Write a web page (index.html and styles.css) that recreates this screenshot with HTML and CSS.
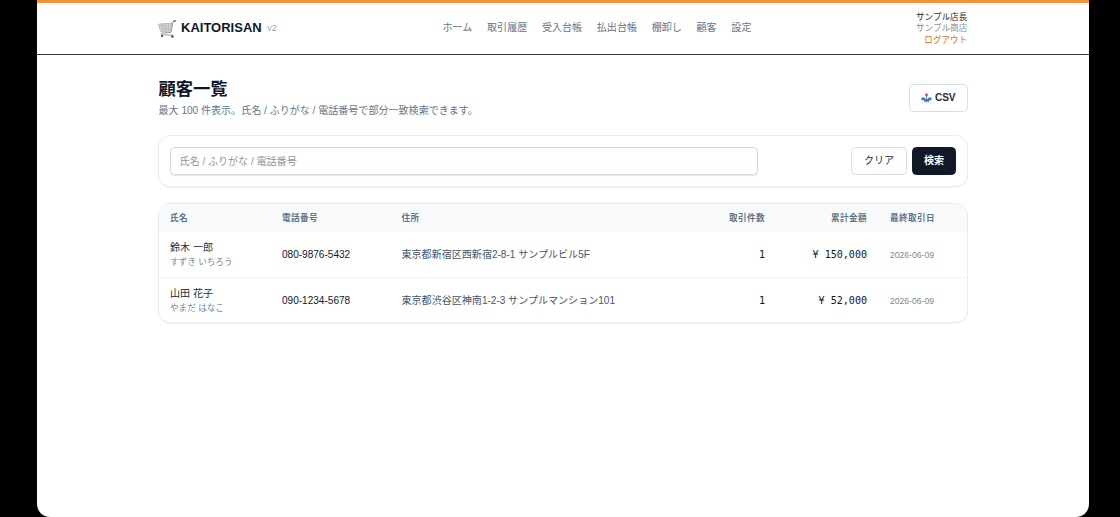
FILE: index.html
```html
<!DOCTYPE html>
<html lang="ja">
<head>
<meta charset="utf-8">
<title>顧客一覧 | KAITORISAN</title>
<link rel="stylesheet" href="styles.css">
</head>
<body>
<div class="window">
  <header class="header">
    <div class="container header-inner">
      <div class="brand">
        <svg class="cart" viewBox="0 0 18 18" fill="none" stroke-linecap="round" stroke-linejoin="round">
          <path d="M.8 4.2 13.9 3 12.8 11 3 11.4Z" fill="#dedede" stroke="#a6a6a6" stroke-width=".7"/>
          <path d="M3.2 4.1 4.9 11M5.6 3.9 7 11M8 3.7 8.8 11M10.4 3.5 10.8 11M1.4 6.3 13.5 5.4M2 8.7 13.1 8.2" stroke="#aaa" stroke-width=".6"/>
          <path d="M17.2.9 14.9 1.5 13 12.4 3.8 13.1 3.4 14.8 14.7 15.2" stroke="#8c8c8c" stroke-width=".9"/>
          <path d="M16 1.1 17.4.8" stroke="#555" stroke-width="1.2"/>
          <circle cx="4" cy="16.1" r="1.15" fill="#444"/><circle cx="14.4" cy="16.4" r="1.25" fill="#444"/>
          <circle cx="4" cy="16.1" r=".4" fill="#ccc"/><circle cx="14.4" cy="16.4" r=".4" fill="#ccc"/>
        </svg>
        <span class="brand-name">KAITORISAN</span>
        <span class="version">v2</span>
      </div>
      <nav class="nav"><a>ホーム</a><a>取引履歴</a><a>受入台帳</a><a>払出台帳</a><a>棚卸し</a><a>顧客</a><a>設定</a></nav>
      <div class="account">
        <div class="user">サンプル店長</div>
        <div class="shop">サンプル商店</div>
        <div class="logout">ログアウト</div>
      </div>
    </div>
  </header>
  <main class="container">
    <div class="heading">
      <div>
        <h1>顧客一覧</h1>
        <p>最大 100 件表示。氏名 / ふりがな / 電話番号で部分一致検索できます。</p>
      </div>
      <button class="button csv">
        <svg class="tray" viewBox="0 0 11 11">
          <path d="M.6 5.8h9.8v4.7H.6z" fill="#e9edf2"/>
          <path d="M.4 4.5h2.9l1 1.3h2.4l1-1.3h2.9v2.2l-1.8.6-1.2 1.5H3.8L2.6 7.3.4 6.7Z" fill="#3f78c9"/>
          <path d="M4.9 2.3h1.2v2.9H4.9z" fill="#8b78b4"/>
          <circle cx="5.5" cy="1.8" r="1.5" fill="#e75352"/>
        </svg>
        <span>CSV</span>
      </button>
    </div>
    <form class="card search">
      <input class="field" type="text" placeholder="氏名 / ふりがな / 電話番号">
      <div class="actions">
        <button type="button" class="button clear">クリア</button>
        <button type="button" class="button primary">検索</button>
      </div>
    </form>
    <section class="card list">
      <table>
        <colgroup><col class="c-name"><col class="c-tel"><col class="c-address"><col class="c-count"><col class="c-total"><col></colgroup>
        <thead>
          <tr><th>氏名</th><th>電話番号</th><th>住所</th><th class="right">取引件数</th><th class="right">累計金額</th><th>最終取引日</th></tr>
        </thead>
        <tbody>
          <tr>
            <td><div class="name">鈴木 一郎</div><div class="kana">すずき いちろう</div></td>
            <td>080-9876-5432</td><td class="address">東京都新宿区西新宿2-8-1 サンプルビル5F</td>
            <td class="right mono">1</td><td class="right mono">¥ 150,000</td><td class="date">2026-06-09</td>
          </tr>
          <tr>
            <td><div class="name">山田 花子</div><div class="kana">やまだ はなこ</div></td>
            <td>090-1234-5678</td><td class="address">東京都渋谷区神南1-2-3 サンプルマンション101</td>
            <td class="right mono">1</td><td class="right mono">¥ 52,000</td><td class="date">2026-06-09</td>
          </tr>
        </tbody>
      </table>
    </section>
  </main>
</div>
</body>
</html>
```
FILE: styles.css
```css
* { box-sizing: border-box; }
body {
  margin: 0;
  background: #000;
  color: #0f172a;
  font: 10.05px/14.4px "Liberation Sans", "Noto Sans CJK JP", sans-serif;
}
.window {
  width: 1052px;
  height: 517px;
  margin-left: 37px;
  overflow: hidden;
  background: #fff;
  border-top: 3px solid #f29339;
  border-radius: 0 0 13px 13px;
}
.container { width: 810.5px; margin: 0 auto 0 120.5px; }
.header { height: 52px; border-bottom: 1px solid #3b3d43; }
.header-inner { display: grid; grid-template-columns: 285px 1fr auto; align-items: center; height: 51px; }
.brand { display: flex; align-items: center; gap: 5.5px; }
.cart { width: 18px; height: 18px; }
.brand-name { font-size: 13px; font-weight: 700; }
.version { font-size: 9px; color: #94a3b8; }
.nav { display: flex; gap: 14.7px; color: #64748b; }
.account { padding-right: .7px; text-align: right; font-size: 8.6px; line-height: 11px; }
.user { color: #1e293b; }
.shop { color: #8490a3; }
.logout { margin-top: 1px; color: #ea6a20; }
.heading { display: flex; justify-content: space-between; align-items: center; padding-top: 23px; }
h1 { margin: 0; padding-left: 1px; font-size: 17.25px; line-height: 23px; font-weight: 700; }
p { margin: 3px 0 0 1px; color: #64748b; }
.button {
  display: flex;
  align-items: center;
  justify-content: center;
  height: 28px;
  padding: 0;
  border: 1px solid #d9dee6;
  border-radius: 4.5px;
  background: #fff;
  color: #1e293b;
  font: inherit;
}
.csv { width: 59px; gap: 2.5px; font-weight: 700; }
.tray { width: 11px; height: 11px; }
.card { border: 1px solid #e9ebef; border-radius: 12px; background: #fff; box-shadow: 0 1px 1px rgba(15, 23, 42, .05); }
.search { display: flex; justify-content: space-between; align-items: center; height: 52px; margin: 17px 0 16px; padding: 0 11px; }
.field {
  width: 588px;
  height: 28px;
  padding: 0 9px;
  border: 1px solid #d5d9e0;
  border-radius: 4.5px;
  font: inherit;
  box-shadow: 0 1px 1px rgba(15, 23, 42, .12);
}
.field::placeholder { color: #949494; opacity: 1; }
.actions { display: flex; gap: 5px; }
.clear { width: 56px; }
.primary { width: 44px; border-color: #111827; background: #111827; color: #fff; font-weight: 700; }
.list { height: 120px; overflow: hidden; }
table { width: 100%; table-layout: fixed; border-collapse: separate; border-spacing: 0; }
.c-name { width: 112px; }
.c-tel { width: 119.5px; }
.c-address { width: 270px; }
.c-count { width: 116.5px; }
.c-total { width: 102px; }
th, td { padding: 0 11.5px; text-align: left; white-space: nowrap; }
th { height: 28px; background: #f8fafc; color: #64748b; font-size: 8.6px; font-weight: 700; letter-spacing: .43px; }
td { height: 45px; color: #0f172a; }
tbody tr:first-child td { height: 46px; border-bottom: 1px solid #f3f4f6; }
td.address { color: #475569; }
td.date, .kana { color: #7b879a; font-size: 8.6px; }
.kana { line-height: 13px; margin-top: 1px; }
.name { color: #1e293b; }
.right { text-align: right; }
.mono { padding-top: 1px; font-family: "DejaVu Sans Mono", monospace; }
```
